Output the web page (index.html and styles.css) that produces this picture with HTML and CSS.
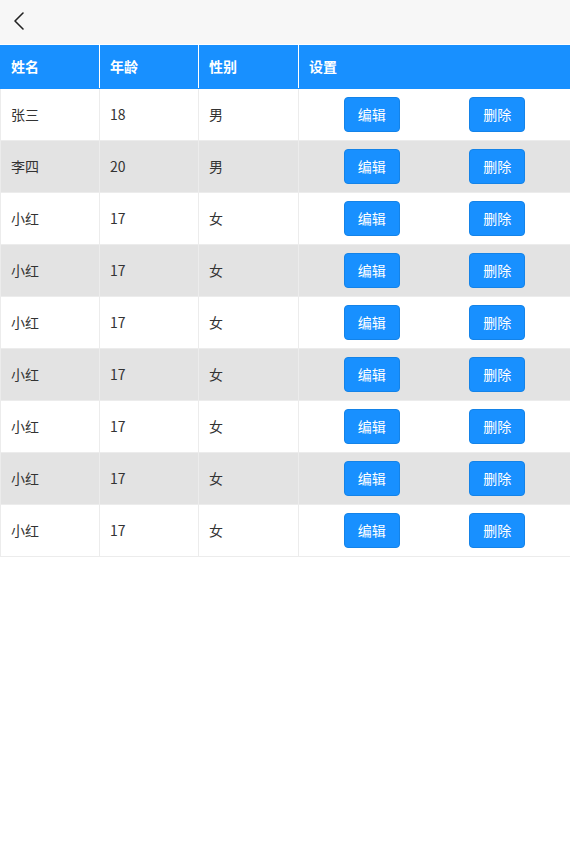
FILE: index.html
```html
<!DOCTYPE html>
<html lang="zh-CN">

<head>
    <meta charset="UTF-8">
    <meta name="viewport" content="width=device-width, initial-scale=1.0">
    <title>用户列表</title>
    <link rel="stylesheet" href="styles.css">
</head>

<body>
    <div class="topbar">
        <a href="javascript:;" class="back">
            <svg width="14" height="20" viewBox="0 0 14 20">
                <path d="M11 2 L3 10 L11 18" fill="none" stroke="#222" stroke-width="1.6" stroke-linecap="round" stroke-linejoin="round" />
            </svg>
        </a>
    </div>
    <table class="list">
        <colgroup>
            <col class="c1">
            <col class="c2">
            <col class="c3">
            <col>
        </colgroup>
        <thead>
            <tr>
                <th>姓名</th>
                <th>年龄</th>
                <th>性别</th>
                <th>设置</th>
            </tr>
        </thead>
        <tbody>
            <tr><td>张三</td><td>18</td><td>男</td><td><div class="ops"><span><button>编辑</button></span><span><button>删除</button></span></div></td></tr>
            <tr><td>李四</td><td>20</td><td>男</td><td><div class="ops"><span><button>编辑</button></span><span><button>删除</button></span></div></td></tr>
            <tr><td>小红</td><td>17</td><td>女</td><td><div class="ops"><span><button>编辑</button></span><span><button>删除</button></span></div></td></tr>
            <tr><td>小红</td><td>17</td><td>女</td><td><div class="ops"><span><button>编辑</button></span><span><button>删除</button></span></div></td></tr>
            <tr><td>小红</td><td>17</td><td>女</td><td><div class="ops"><span><button>编辑</button></span><span><button>删除</button></span></div></td></tr>
            <tr><td>小红</td><td>17</td><td>女</td><td><div class="ops"><span><button>编辑</button></span><span><button>删除</button></span></div></td></tr>
            <tr><td>小红</td><td>17</td><td>女</td><td><div class="ops"><span><button>编辑</button></span><span><button>删除</button></span></div></td></tr>
            <tr><td>小红</td><td>17</td><td>女</td><td><div class="ops"><span><button>编辑</button></span><span><button>删除</button></span></div></td></tr>
            <tr><td>小红</td><td>17</td><td>女</td><td><div class="ops"><span><button>编辑</button></span><span><button>删除</button></span></div></td></tr>
        </tbody>
    </table>
</body>

</html>
```

FILE: styles.css
```css
body {
    margin: 0;
    background-color: #fff;
    font-family: "Noto Sans CJK SC", "Noto Sans", sans-serif;
    font-size: 14px;
    color: #333;
}

.topbar {
    height: 44px;
    background-color: #f7f7f7;
    display: flex;
    align-items: center;
    padding-left: 12px;
}

.back {
    display: flex;
    width: 14px;
    height: 20px;
    margin-top: -3px;
}

.list {
    width: 100%;
    table-layout: fixed;
    border-collapse: collapse;
}

.c1,
.c2 {
    width: 99px;
}

.c3 {
    width: 100px;
}

.list th,
.list td {
    border: 1px solid #ececec;
    padding: 0 10px 2px;
    text-align: left;
}

.list th:last-child,
.list td:last-child {
    border-right: none;
}

.list th {
    height: 41px;
    background-color: #1890ff;
    border-color: #1890ff #fff #1890ff #fff;
    border-top-color: #fff;
    color: #fff;
    font-weight: bold;
}

.list th:first-child {
    border-left-color: #1890ff;
}

.list td {
    height: 49px;
}

.list tbody tr:nth-child(even) td {
    background-color: #e3e3e3;
}

.ops {
    display: flex;
    margin-top: 2px;
}

.ops>span {
    flex: 1;
    display: flex;
    justify-content: center;
}

.ops button {
    width: 56px;
    height: 35px;
    padding: 0 0 2px;
    border: 1px solid #1483e8;
    border-radius: 4px;
    background-color: #1890ff;
    color: #fff;
    font-family: inherit;
    font-size: 14px;
}
```
